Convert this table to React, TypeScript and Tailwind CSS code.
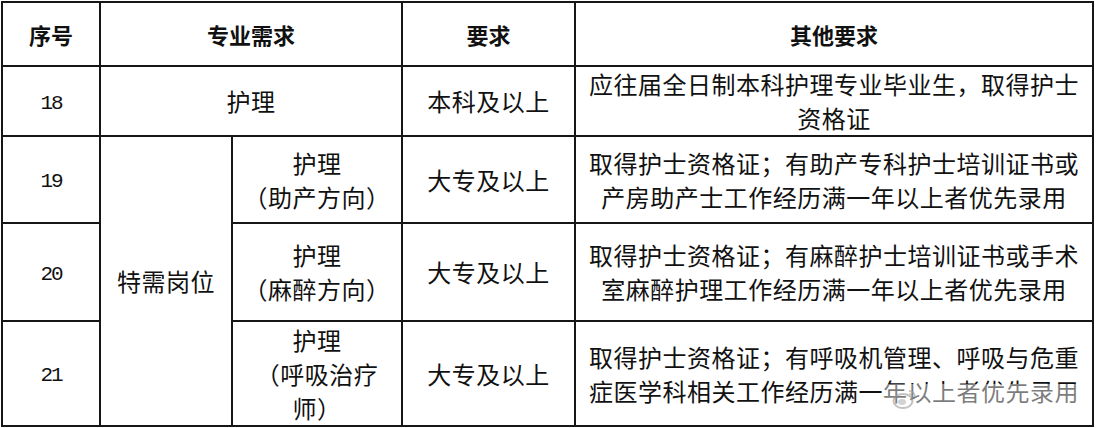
import type { ReactNode } from "react";

const font = { fontFamily: '"Noto Sans CJK SC", "Noto Sans", sans-serif' };

const Num = ({ children }: { children: ReactNode }) => (
  <span className="font-['Liberation_Mono',monospace] text-[21px] text-[#111] tracking-[-2px]">{children}</span>
);

const Lines = ({ lines }: { lines: string[] }) => (
  <div className="flex flex-col items-center leading-[34px]">
    {lines.map((l) => (
      <span key={l}>{l}</span>
    ))}
  </div>
);

const td = "border-2 border-[#161616] text-center align-middle p-0 leading-[34px]";

export default function App() {
  return (
    <div className="w-[1096px] h-[428px] bg-white pt-px pl-px relative overflow-hidden" style={font}>
      <table className="table-fixed border-collapse text-[24px] text-[#111] tracking-[0.5px]">
        <colgroup>
          <col className="w-[98px]" />
          <col className="w-[132px]" />
          <col className="w-[170px]" />
          <col className="w-[173px]" />
          <col className="w-[518px]" />
        </colgroup>
        <tbody>
          <tr className="h-[64px] text-[22px] font-bold tracking-normal">
            <td className={td}>序号</td>
            <td className={td} colSpan={2}>
              专业需求
            </td>
            <td className={td}>要求</td>
            <td className={td}>其他要求</td>
          </tr>
          <tr className="h-[70px]">
            <td className={td}>
              <Num>18</Num>
            </td>
            <td className={td} colSpan={2}>
              护理
            </td>
            <td className={td}>本科及以上</td>
            <td className={td}>
              <Lines lines={["应往届全日制本科护理专业毕业生，取得护士", "资格证"]} />
            </td>
          </tr>
          <tr className="h-[87px]">
            <td className={td}>
              <Num>19</Num>
            </td>
            <td className={td} rowSpan={3}>
              特需岗位
            </td>
            <td className={td}>
              <Lines lines={["护理", "（助产方向）"]} />
            </td>
            <td className={td}>大专及以上</td>
            <td className={td}>
              <Lines
                lines={["取得护士资格证；有助产专科护士培训证书或", "产房助产士工作经历满一年以上者优先录用"]}
              />
            </td>
          </tr>
          <tr className="h-[98px]">
            <td className={td}>
              <Num>20</Num>
            </td>
            <td className={td}>
              <Lines lines={["护理", "（麻醉方向）"]} />
            </td>
            <td className={td}>大专及以上</td>
            <td className={td}>
              <Lines
                lines={["取得护士资格证；有麻醉护士培训证书或手术", "室麻醉护理工作经历满一年以上者优先录用"]}
              />
            </td>
          </tr>
          <tr className="h-[105px]">
            <td className={td}>
              <Num>21</Num>
            </td>
            <td className={td}>
              <Lines lines={["护理", "（呼吸治疗", "师）"]} />
            </td>
            <td className={td}>大专及以上</td>
            <td className={td}>
              <Lines
                lines={["取得护士资格证；有呼吸机管理、呼吸与危重", "症医学科相关工作经历满一年以上者优先录用"]}
              />
            </td>
          </tr>
        </tbody>
      </table>

      {/* watermark */}
      <div className="absolute left-[884px] top-[384px] w-[200px] h-[30px] bg-white/45 flex items-center pl-[8px]">
        <svg width="26" height="22" viewBox="0 0 26 22" className="opacity-60">
          <ellipse cx="11" cy="13" rx="9.5" ry="7" fill="none" stroke="#9a9a9a" strokeWidth="2" />
          <ellipse cx="10" cy="14" rx="4" ry="3" fill="#b5b5b5" />
          <path d="M17 3a6 6 0 0 1 6 6" fill="none" stroke="#a0a0a0" strokeWidth="1.8" />
          <path d="M17 6a3 3 0 0 1 3 3" fill="none" stroke="#a0a0a0" strokeWidth="1.6" />
        </svg>
      </div>
    </div>
  );
}
